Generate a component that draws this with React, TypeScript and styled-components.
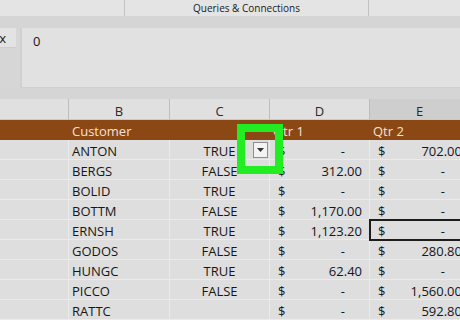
import React from "react";
import styled, { createGlobalStyle, css } from "styled-components";

const GlobalStyle = createGlobalStyle`
  html, body {
    margin: 0;
    padding: 0;
    width: 460px;
    height: 320px;
    overflow: hidden;
    background: #d9d9d9;
  }
  body {
    font-family: "Open Sans", "Liberation Sans", sans-serif;
    color: #161616;
  }
  * { box-sizing: border-box; }
`;

const Page = styled.div`
  width: 460px;
  height: 320px;
  overflow: hidden;
  display: flex;
  flex-direction: column;
  background: #d9d9d9;
`;

const Ribbon = styled.div`
  height: 16px;
  display: grid;
  grid-template-columns: 125px 244px 1fr;
  background: #e4e4e4;
`;

const RibbonSection = styled.div`
  border-right: 1px solid #c2c2c2;
  font-size: 10px;
  line-height: 17px;
  text-align: center;
  white-space: nowrap;
  color: #1a1a1a;
  &:last-child { border-right: none; }
`;

const Band = styled.div<{ $h: number }>`
  height: ${(p) => p.$h}px;
  background: #d5d5d5;
`;

const FormulaRow = styled.div`
  height: 61px;
  display: flex;
  gap: 4px;
  background: #d6d6d6;
`;

const NameBox = styled.div`
  width: 16px;
  height: 20px;
  background: #e3e3e3;
  border-bottom: 1px solid #cdcdcd;
  font-size: 13px;
  line-height: 20px;
  overflow: hidden;
  text-align: right;
  padding-right: 10px;
  direction: rtl;
`;

const FormulaBox = styled.div`
  flex: 1;
  background: #e1e1e1;
  border-left: 2px solid #d0d0d0;
  border-bottom: 1px solid #cfcfcf;
  padding: 4px 0 0 11px;
  font-size: 13px;
  line-height: 18px;
`;

const Sheet = styled.div`
  position: relative;
  display: grid;
  grid-template-columns: 69px 101px 100px 100px 100px;
  grid-template-rows: 21px 20px;
  grid-auto-rows: 20px;
  width: 470px;
  font-size: 13px;
`;

const ColHeader = styled.div<{ $selected?: boolean }>`
  background: ${(p) => (p.$selected ? "#cecece" : "#e0e0e0")};
  border-right: 1px solid #bdbdbd;
  border-bottom: 1px solid #c8c8c8;
  text-align: center;
  padding-top: 1px;
  line-height: 22px;
  color: #2a2a2a;
`;

const HeadCell = styled.div`
  background: #8b4714;
  color: #f6e3cf;
  padding-left: 3px;
  padding-top: 1px;
  line-height: 20px;
  white-space: nowrap;
`;

const Cell = styled.div<{ $align?: "left" | "center"; $selected?: boolean }>`
  position: relative;
  background: #dedede;
  border-right: 1px solid #ebebeb;
  border-bottom: 1px solid #ebebeb;
  line-height: 20px;
  white-space: nowrap;
  padding: 1px 3px 0;
  text-align: ${(p) => p.$align ?? "left"};
  ${(p) =>
    p.$selected &&
    css`
      outline: 2px solid #1d1d1d;
      outline-offset: -1px;
      z-index: 1;
    `}
`;

const MoneyCell = styled(Cell)`
  display: flex;
  justify-content: space-between;
  padding: 1px 7px 0 8px;
`;

const Dash = styled.span`
  padding-right: 17px;
`;

const Highlight = styled.div`
  position: absolute;
  left: 237px;
  top: 25px;
  width: 46px;
  height: 50px;
  border: 8px solid #22ec22;
  display: flex;
  align-items: center;
  justify-content: center;
  z-index: 2;
`;

const DropButton = styled.div`
  width: 15px;
  height: 16px;
  margin-top: 2px;
  background: #f3f3f3;
  border: 1px solid #8e8e8e;
  display: flex;
  align-items: center;
  justify-content: center;
`;

type Row = [string, string, string | null, string | null];

const rows: Row[] = [
  ["ANTON", "TRUE", null, "702.00"],
  ["BERGS", "FALSE", "312.00", null],
  ["BOLID", "TRUE", null, null],
  ["BOTTM", "FALSE", "1,170.00", null],
  ["ERNSH", "TRUE", "1,123.20", null],
  ["GODOS", "FALSE", null, "280.80"],
  ["HUNGC", "TRUE", "62.40", null],
  ["PICCO", "FALSE", null, "1,560.00"],
  ["RATTC", "", null, "592.80"],
];

const Money = ({ value, selected }: { value: string | null; selected?: boolean }) => (
  <MoneyCell $selected={selected}>
    <span>$</span>
    {value ? <span>{value}</span> : <Dash>-</Dash>}
  </MoneyCell>
);

export default function App() {
  return (
    <>
      <GlobalStyle />
      <Page>
        <Ribbon>
          <RibbonSection />
          <RibbonSection>Queries &amp; Connections</RibbonSection>
          <RibbonSection />
        </Ribbon>
        <Band $h={12} />
        <FormulaRow>
          <NameBox>x</NameBox>
          <FormulaBox>0</FormulaBox>
        </FormulaRow>
        <Band $h={11} />
        <Sheet>
          <ColHeader />
          <ColHeader>B</ColHeader>
          <ColHeader>C</ColHeader>
          <ColHeader>D</ColHeader>
          <ColHeader $selected>E</ColHeader>

          <HeadCell />
          <HeadCell>Customer</HeadCell>
          <HeadCell />
          <HeadCell>Qtr 1</HeadCell>
          <HeadCell>Qtr 2</HeadCell>

          {rows.map(([name, flag, q1, q2], i) => (
            <React.Fragment key={name}>
              <Cell />
              <Cell>{name}</Cell>
              <Cell $align="center">{flag}</Cell>
              <Money value={q1} />
              <Money value={q2} selected={i === 4} />
            </React.Fragment>
          ))}

          <Highlight>
            <DropButton>
              <svg width="7" height="4" viewBox="0 0 7 4">
                <path d="M0 0 L7 0 L3.5 4 Z" fill="#333" />
              </svg>
            </DropButton>
          </Highlight>
        </Sheet>
      </Page>
    </>
  );
}
